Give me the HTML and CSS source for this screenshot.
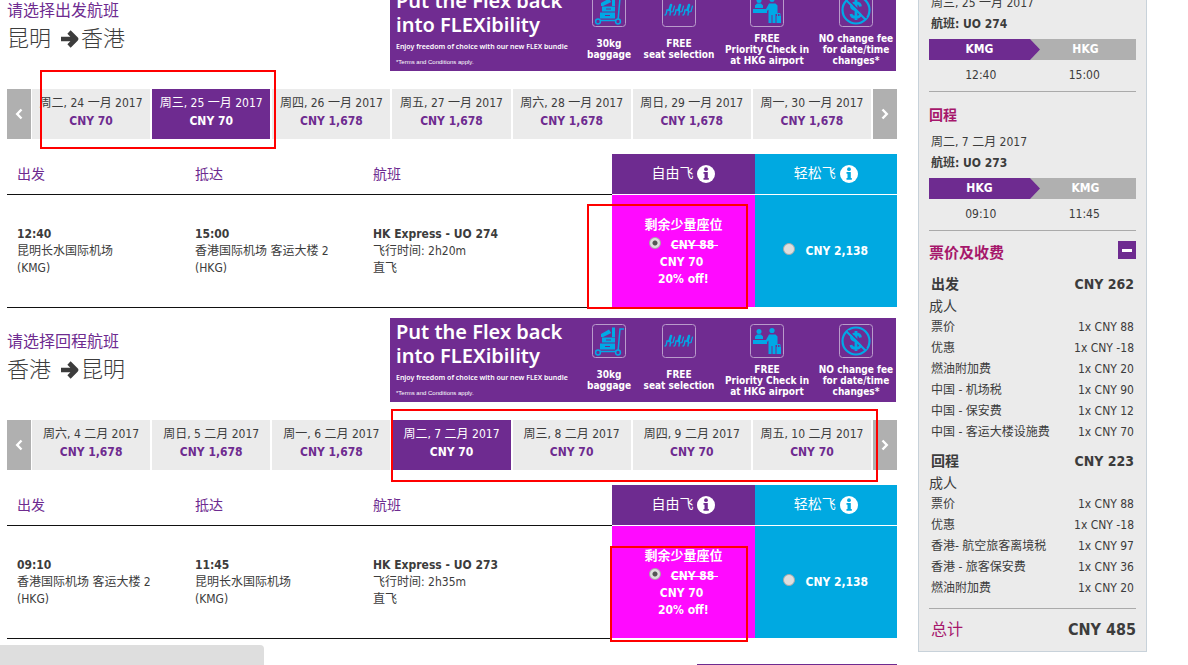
FILE: index.html
```html
<!DOCTYPE html>
<html lang="zh-CN">
<head>
<meta charset="utf-8">
<title>选择航班</title>
<link rel="stylesheet" href="styles.css">
</head>
<body>
<svg class="sprite" aria-hidden="true">
  <symbol id="arrow" viewBox="0 0 20 20"><path d="M2 10h14M10 3l7 7-7 7" fill="none" stroke="currentColor" stroke-width="4.600" stroke-linejoin="round"/></symbol>
  <symbol id="prev" viewBox="0 0 8 12"><path d="M6.500 1.500L2.200 6l4.300 4.500" fill="none" stroke="currentColor" stroke-width="2.400"/></symbol>
  <symbol id="next" viewBox="0 0 8 12"><path d="M1.500 1.500L5.800 6l-4.300 4.500" fill="none" stroke="currentColor" stroke-width="2.400"/></symbol>
  <symbol id="info" viewBox="0 0 18 18"><circle cx="9" cy="9" r="9" fill="#fff"/><circle cx="9" cy="4.200" r="1.900" fill="currentColor"/><path d="M6.500 7h4.300v6h1v1.800H6.500V13h1V8.700h-1z" fill="currentColor"/></symbol>
  <symbol id="baggage" viewBox="0 0 34 34"><rect x=".5" y=".5" width="33" height="33" rx="3" fill="none" stroke="#b99bcb"/><g fill="#00a9e6"><path d="M9 10l8-4.500 2.200 3.500-8 4H9zM20 3.500h3v9.500h-3zM10 13.500h13v5H10zM8 19.500h15v6H8z"/><path d="M6 27.500h20L28 5h4" fill="none" stroke="#00a9e6" stroke-width="1.500"/></g><path d="M14 16h5M13 22.500h5" stroke="#702c91" stroke-width="1.200"/><circle cx="6" cy="28.500" r="2.400" fill="#702c91" stroke="#00a9e6" stroke-width="1.500"/><circle cx="26" cy="28.500" r="2.400" fill="#702c91" stroke="#00a9e6" stroke-width="1.500"/></symbol>
  <symbol id="seat" viewBox="0 0 34 34"><rect x=".5" y=".5" width="33" height="33" rx="3" fill="none" stroke="#b99bcb"/><g id="chair" fill="none" stroke="#00a9e6" stroke-linecap="round"><path d="M3 22c1.500 0 1.500-3 2-5h3.500M8 22l.5-4" stroke-width="1.400"/><path d="M9 12l-1.500 5" stroke-width="2.600"/><path d="M12.500 13l-1.500 5.500-2 .5" stroke-width="1.200"/></g><use href="#chair" x="9"/><use href="#chair" x="18"/></symbol>
  <symbol id="checkin" viewBox="0 0 34 34"><rect x=".5" y=".5" width="33" height="33" rx="3" fill="none" stroke="#b99bcb"/><g fill="#00a9e6"><circle cx="9" cy="7.500" r="2.500"/><path d="M5 15v-2.500L7 10.500h4l2 2V15zM3 16h14v4H3z"/><circle cx="22" cy="6.500" r="2.600"/><path d="M16 16l3-5.500h6.500l2 2V21h-2v9h-3v-8h-1v8h-3V16.500L17 18zM26.500 23H31v7h-4.500z"/></g><path d="M27.500 23v-2.500H30V23" fill="none" stroke="#00a9e6"/></symbol>
  <symbol id="nofee" viewBox="0 0 34 34"><rect x=".5" y=".5" width="33" height="33" rx="3" fill="none" stroke="#b99bcb"/><g fill="none" stroke="#00a9e6"><circle cx="17" cy="17" r="13.500" stroke-width="2.200"/><path d="M21.500 13.500c-.5-5-9-4.500-9 0 0 4 9 3 9 7.500 0 4.500-9 4.500-9.500 0M17 7v20" stroke-width="2.800"/><path d="M9 6.500l18.500 18.500" stroke="#702c91" stroke-width="1.400"/><path d="M7.500 7.500l19 19" stroke-width="2"/></g></symbol>
</svg>

<div class="page">
  <main class="main">
    <section class="trip">
      <header class="trip-head">
        <div class="trip-title">
          <p class="trip-hint">请选择出发航班</p>
          <h2 class="trip-route">昆明<svg class="route-arrow"><use href="#arrow"/></svg>香港</h2>
        </div>
        <div class="banner">
          <div class="banner-copy">
            <p class="banner-title">Put the Flex back<br>into FLEXibility</p>
            <p class="banner-sub">Enjoy freedom of choice with our new FLEX bundle</p>
            <p class="banner-terms">*Terms and Conditions apply.</p>
          </div>
          <div class="perk perk-bag"><svg><use href="#baggage"/></svg><p>30kg<br>baggage</p></div>
          <div class="perk perk-seat"><svg><use href="#seat"/></svg><p>FREE<br>seat selection</p></div>
          <div class="perk perk-check"><svg><use href="#checkin"/></svg><p>FREE<br>Priority Check in<br>at HKG airport</p></div>
          <div class="perk perk-fee"><svg><use href="#nofee"/></svg><p>NO change fee<br>for date/time<br>changes*</p></div>
        </div>
      </header>
      <div class="dates">
        <button class="step" aria-label="上一页"><svg><use href="#prev"/></svg></button>
        <div class="days">
          <button class="day">周二, 24 一月 2017<b>CNY 70</b></button>
          <button class="day selected">周三, 25 一月 2017<b>CNY 70</b></button>
          <button class="day">周四, 26 一月 2017<b>CNY 1,678</b></button>
          <button class="day">周五, 27 一月 2017<b>CNY 1,678</b></button>
          <button class="day">周六, 28 一月 2017<b>CNY 1,678</b></button>
          <button class="day">周日, 29 一月 2017<b>CNY 1,678</b></button>
          <button class="day">周一, 30 一月 2017<b>CNY 1,678</b></button>
        </div>
        <button class="step" aria-label="下一页"><svg><use href="#next"/></svg></button>
      </div>
      <table class="flights">
        <thead>
          <tr>
            <th class="col-place">出发</th><th class="col-place">抵达</th><th class="col-flight">航班</th>
            <th class="fare flex">自由飞<svg class="info"><use href="#info"/></svg></th>
            <th class="fare easy">轻松飞<svg class="info"><use href="#info"/></svg></th>
          </tr>
        </thead>
        <tbody>
          <tr>
            <td><b>12:40</b><br>昆明长水国际机场<br>(KMG)</td>
            <td><b>15:00</b><br>香港国际机场 客运大楼 2<br>(HKG)</td>
            <td><b>HK Express - UO 274</b><br>飞行时间: 2h20m<br>直飞</td>
            <td class="fare promo"><label><span class="few">剩余少量座位</span><input type="radio" name="out" checked><s>CNY 88&nbsp;</s><br>CNY 70&nbsp;<br>20% off!</label></td>
            <td class="fare easy"><label><input type="radio" name="out">CNY 2,138</label></td>
          </tr>
        </tbody>
      </table>
      <div class="mark mark-out-dates"></div>
      <div class="mark mark-out-fare"></div>
    </section>

    <section class="trip">
      <header class="trip-head">
        <div class="trip-title">
          <p class="trip-hint">请选择回程航班</p>
          <h2 class="trip-route">香港<svg class="route-arrow"><use href="#arrow"/></svg>昆明</h2>
        </div>
        <div class="banner">
          <div class="banner-copy">
            <p class="banner-title">Put the Flex back<br>into FLEXibility</p>
            <p class="banner-sub">Enjoy freedom of choice with our new FLEX bundle</p>
            <p class="banner-terms">*Terms and Conditions apply.</p>
          </div>
          <div class="perk perk-bag"><svg><use href="#baggage"/></svg><p>30kg<br>baggage</p></div>
          <div class="perk perk-seat"><svg><use href="#seat"/></svg><p>FREE<br>seat selection</p></div>
          <div class="perk perk-check"><svg><use href="#checkin"/></svg><p>FREE<br>Priority Check in<br>at HKG airport</p></div>
          <div class="perk perk-fee"><svg><use href="#nofee"/></svg><p>NO change fee<br>for date/time<br>changes*</p></div>
        </div>
      </header>
      <div class="dates">
        <button class="step" aria-label="上一页"><svg><use href="#prev"/></svg></button>
        <div class="days">
          <button class="day">周六, 4 二月 2017<b>CNY 1,678</b></button>
          <button class="day">周日, 5 二月 2017<b>CNY 1,678</b></button>
          <button class="day">周一, 6 二月 2017<b>CNY 1,678</b></button>
          <button class="day selected">周二, 7 二月 2017<b>CNY 70</b></button>
          <button class="day">周三, 8 二月 2017<b>CNY 70</b></button>
          <button class="day">周四, 9 二月 2017<b>CNY 70</b></button>
          <button class="day">周五, 10 二月 2017<b>CNY 70</b></button>
        </div>
        <button class="step" aria-label="下一页"><svg><use href="#next"/></svg></button>
      </div>
      <table class="flights">
        <thead>
          <tr>
            <th class="col-place">出发</th><th class="col-place">抵达</th><th class="col-flight">航班</th>
            <th class="fare flex">自由飞<svg class="info"><use href="#info"/></svg></th>
            <th class="fare easy">轻松飞<svg class="info"><use href="#info"/></svg></th>
          </tr>
        </thead>
        <tbody>
          <tr>
            <td><b>09:10</b><br>香港国际机场 客运大楼 2<br>(HKG)</td>
            <td><b>11:45</b><br>昆明长水国际机场<br>(KMG)</td>
            <td><b>HK Express - UO 273</b><br>飞行时间: 2h35m<br>直飞</td>
            <td class="fare promo"><label><span class="few">剩余少量座位</span><input type="radio" name="back" checked><s>CNY 88&nbsp;</s><br>CNY 70&nbsp;<br>20% off!</label></td>
            <td class="fare easy"><label><input type="radio" name="back">CNY 2,138</label></td>
          </tr>
        </tbody>
      </table>
      <div class="mark mark-back-dates"></div>
      <div class="mark mark-back-fare"></div>
    </section>
    <div class="next-box"></div>
  </main>

  <aside class="summary">
    <section class="leg">
      <h3>出发</h3>
      <p>周三, 25 一月 2017</p>
      <p><b>航班: UO 274</b></p>
      <div class="route-bar"><span class="from">KMG</span><span class="to">HKG</span></div>
      <div class="times"><span>12:40</span><span>15:00</span></div>
    </section>
    <section class="leg">
      <h3>回程</h3>
      <p>周二, 7 二月 2017</p>
      <p><b>航班: UO 273</b></p>
      <div class="route-bar"><span class="from">HKG</span><span class="to">KMG</span></div>
      <div class="times"><span>09:10</span><span>11:45</span></div>
    </section>
    <section class="fees">
      <div class="fees-head"><h3>票价及收费</h3><button class="toggle" aria-label="收起"></button></div>
      <dl class="fee-group">
        <div class="fee-total"><dt>出发</dt><dd>CNY 262</dd></div>
        <div class="fee-person"><dt>成人</dt></div>
        <div><dt>票价</dt><dd>1x CNY 88</dd></div>
        <div><dt>优惠</dt><dd>1x CNY -18</dd></div>
        <div><dt>燃油附加费</dt><dd>1x CNY 20</dd></div>
        <div><dt>中国 - 机场税</dt><dd>1x CNY 90</dd></div>
        <div><dt>中国 - 保安费</dt><dd>1x CNY 12</dd></div>
        <div><dt>中国 - 客运大楼设施费</dt><dd>1x CNY 70</dd></div>
      </dl>
      <dl class="fee-group">
        <div class="fee-total"><dt>回程</dt><dd>CNY 223</dd></div>
        <div class="fee-person"><dt>成人</dt></div>
        <div><dt>票价</dt><dd>1x CNY 88</dd></div>
        <div><dt>优惠</dt><dd>1x CNY -18</dd></div>
        <div><dt>香港- 航空旅客离境税</dt><dd>1x CNY 97</dd></div>
        <div><dt>香港 - 旅客保安费</dt><dd>1x CNY 36</dd></div>
        <div><dt>燃油附加费</dt><dd>1x CNY 20</dd></div>
      </dl>
    </section>
    <div class="grand"><span>总计</span><b>CNY 485</b></div>
  </aside>
</div>
<div class="status"></div>
</body>
</html>
```

FILE: styles.css
```css
* { box-sizing: border-box; }
html, body { height: 100%; overflow: hidden; }
body {
  margin: 0;
  background: #fff;
  color: #3c3c3c;
  font: 12px/17px "DejaVu Sans Condensed", "Noto Sans CJK SC", sans-serif;
}
p, h2, h3, dl, dd { margin: 0; }
button { font: inherit; border: 0; margin: 0; padding: 0; color: inherit; cursor: pointer; }
.sprite { position: absolute; width: 0; height: 0; }

.page { display: flex; align-items: flex-start; gap: 21px; padding: 0 41px 0 7px; }
.main { flex: 1; min-width: 0; margin-top: -13px; }

.trip { position: relative; margin-bottom: 10px; }
.trip-head { display: flex; justify-content: space-between; padding-right: 1px; margin-bottom: 18px; }
.trip-title { padding-top: 13px; }
.trip-hint { font-size: 16px; line-height: 22px; color: #6e2b90; }
.trip-route { display: flex; align-items: center; font-size: 22px; line-height: 34px; font-weight: 300; }
.route-arrow { width: 20px; height: 20px; margin: 0 2px 0 8px; }

.banner {
  display: flex;
  width: 506px;
  height: 84px;
  background: #702c91;
  color: #fff;
  overflow: hidden;
}
.banner-copy { width: 188px; padding: 2px 0 0 6px; white-space: nowrap; }
.banner-title { font: 600 20px/24px "Noto Sans", sans-serif; }
.banner-sub { font: 600 7px/10px "Noto Sans", sans-serif; margin-top: 5px; }
.banner-terms { font: 6px/10px "Liberation Sans", sans-serif; margin-top: 5px; }
.perk {
  display: flex;
  flex-direction: column;
  align-items: center;
  padding-top: 6px;
  font: bold 10px/11px "DejaVu Sans Condensed", sans-serif;
  text-align: center;
  white-space: nowrap;
}
.perk svg { width: 34px; height: 34px; flex: none; }
.perk p { flex: 1; display: grid; align-content: center; }
.perk-bag { width: 62px; }
.perk-seat { width: 78px; }
.perk-check { width: 98px; }
.perk-fee { width: 80px; }

.dates { display: flex; height: 50px; margin-bottom: 15px; }
.step { flex: none; width: 24px; background: #b0b0b0; color: #fff; display: grid; place-items: center; }
.step svg { width: 8px; height: 12px; }
.days { flex: 1; display: grid; grid-template-columns: repeat(7, 1fr); gap: 2px; padding: 0 2px 0 1px; }
.day { background: #ebebeb; line-height: 18px; padding-bottom: 5px; white-space: nowrap; min-width: 0; }
.day b { display: block; color: #6e2b90; }
.day.selected, .day.selected b { background: #6e2b90; color: #fff; }

.flights { width: 100%; table-layout: fixed; border-collapse: separate; border-spacing: 0; }
.flights th {
  height: 41px;
  padding: 0 10px;
  border-bottom: 1px solid #111;
  text-align: left;
  font-size: 14px;
  font-weight: 400;
  color: #6e2b90;
}
.flights td { height: 113px; padding: 0 10px; border-bottom: 1px solid #111; vertical-align: middle; }
.col-place { width: 20%; }
.col-flight { width: 28%; }
.flights .fare { text-align: center; border-bottom-color: #fff; color: #fff; padding: 0; }
.flights td.fare { font-weight: bold; }
.fare.flex { background: #6e2b90; }
.fare.easy { background: #00a9e1; }
.fare.promo { background: #ff0aff; }
.info { width: 18px; height: 18px; vertical-align: middle; margin-left: 4px; }
.flex .info { color: #6e2b90; }
.easy .info { color: #00a9e1; }
.few { display: block; font-size: 13px; line-height: 19px; margin-bottom: 3px; }
.fare input {
  appearance: none;
  width: 12px;
  height: 12px;
  margin: 0 10px 0 0;
  border: 1px solid #a8a8a8;
  border-radius: 50%;
  background: #dedede;
}
.fare input:checked { background: radial-gradient(circle, #555 0 2px, #dedede 3px); }

.mark { position: absolute; border: 2px solid #f00; pointer-events: none; }
.mark-out-dates { left: 33px; top: 83px; width: 236px; height: 79px; }
.mark-out-fare { left: 580px; top: 217px; width: 161px; height: 105px; }
.mark-back-dates { left: 384px; top: 91px; width: 487px; height: 73px; }
.mark-back-fare { left: 603px; top: 228px; width: 138px; height: 96px; }
.next-box { width: 200px; margin: 25px 0 0 auto; border-top: 1px solid #6e2b90; }

.summary {
  flex: none;
  width: 229px;
  margin-top: -58px;
  padding: 10px 10px 0;
  border: 1px solid #c8d2da;
  background: #ebebeb;
}
.summary h3 { font-size: 14px; line-height: 22px; color: #a6176b; }
.leg { padding-top: 12px; border-bottom: 1px solid #aaa; }
.leg h3 { margin-bottom: 6px; }
.leg p { line-height: 21px; padding-left: 2px; }
.route-bar { display: flex; margin-top: 4px; background: #b0b0b0; color: #fff; font-weight: bold; line-height: 21px; text-align: center; }
.route-bar .from {
  flex: none;
  width: 111px;
  padding-right: 10px;
  background: #6e2b90;
  clip-path: polygon(0 0, 101px 0, 100% 50%, 101px 100%, 0 100%);
}
.route-bar .to { flex: 1; padding-right: 5px; }
.times { display: flex; line-height: 31px; text-align: center; }
.times span { flex: 1; }
.fees { padding: 10px 0 9px; border-bottom: 1px solid #aaa; }
.fees-head { display: flex; justify-content: space-between; align-items: flex-start; margin-bottom: 8px; }
.fees-head h3 { font-size: 15px; line-height: 24px; }
.toggle { display: grid; place-items: center; width: 18px; height: 18px; background: #6e2b90; }
.toggle::before { content: ""; width: 10px; height: 3px; background: #fff; }
.fee-group { line-height: 21px; padding: 0 2px; }
.fee-group + .fee-group { margin-top: 7px; }
.fee-group div { display: flex; justify-content: space-between; }
.fee-group .fee-total { font-size: 14px; line-height: 23px; font-weight: bold; }
.fee-person { font-size: 14px; margin-left: -2px; }
.grand { display: flex; justify-content: space-between; padding-left: 2px; font-size: 16px; line-height: 42px; }
.grand span { color: #a6176b; }

.status { position: fixed; left: 0; bottom: 0; width: 264px; height: 20px; background: #dedede; border-top-right-radius: 4px; }
```
